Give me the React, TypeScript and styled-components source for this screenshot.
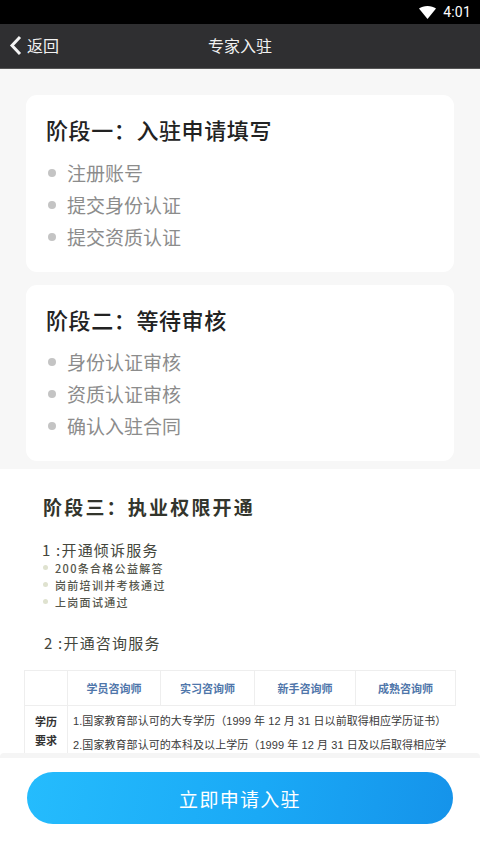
import React from "react";
import styled, { createGlobalStyle } from "styled-components";

const cjk = `"Noto Sans CJK SC", "Liberation Sans", sans-serif`;
const mixed = `"Liberation Sans", "Noto Sans CJK SC", sans-serif`;

const GlobalStyle = createGlobalStyle`
  html, body {
    margin: 0;
    padding: 0;
    background: #fff;
    font-family: ${cjk};
  }
  * {
    box-sizing: border-box;
  }
`;

const Screen = styled.div`
  position: relative;
  width: 480px;
  height: 853px;
  overflow: hidden;
  display: flex;
  flex-direction: column;
  background: #fff;
`;

const StatusBar = styled.div`
  height: 24px;
  flex: none;
  background: #000;
  color: #fff;
  display: flex;
  align-items: center;
  justify-content: flex-end;
  padding-right: 9px;
  gap: 7px;
  font: 14px Roboto, sans-serif;
  letter-spacing: 0.2px;
`;

const NavBar = styled.div`
  position: relative;
  height: 45px;
  flex: none;
  background: #2f2f31;
  border-bottom: 1px solid #555;
  color: #f2f2f2;
  display: flex;
  align-items: center;
  justify-content: center;
  padding-bottom: 2px;
  font-size: 16px;
`;

const BackLink = styled.div`
  position: absolute;
  left: 9px;
  top: 0;
  bottom: 2px;
  display: flex;
  align-items: center;
  gap: 5px;
`;

const Intro = styled.div`
  flex: none;
  background: #f7f7f7;
  height: 400px;
  padding: 26px 26px 0;
  display: flex;
  flex-direction: column;
  gap: 13px;
`;

const Card = styled.section<{ $height: number }>`
  height: ${(p) => p.$height}px;
  background: #fff;
  border-radius: 11px;
  padding: 18px 20px 0;
`;

const CardTitle = styled.h2<{ $gap: number }>`
  margin: 0 0 ${(p) => p.$gap}px;
  font-size: 22px;
  line-height: 33px;
  font-weight: 500;
  letter-spacing: 0.6px;
  color: #222;
`;

const StepList = styled.ul`
  margin: 0;
  padding: 0;
  list-style: none;
`;

const Step = styled.li`
  display: flex;
  align-items: center;
  gap: 11px;
  height: 32px;
  font-size: 19px;
  color: #8c8c8c;
  &::before {
    content: "";
    width: 8px;
    height: 8px;
    margin: 2px 0 0 2px;
    border-radius: 50%;
    background: #c4c4c4;
  }
`;

const Poster = styled.div`
  flex: 1;
  padding: 24px 24px 0;
  color: #33352c;
`;

const PosterTitle = styled.h3`
  margin: 0 0 0 19px;
  font-size: 19px;
  line-height: 27px;
  font-weight: 700;
  letter-spacing: 2.2px;
`;

const ServiceHeading = styled.div<{ $indent: number; $top: number }>`
  margin: ${(p) => p.$top}px 0 0 ${(p) => p.$indent}px;
  font-size: 15px;
  line-height: 18px;
  letter-spacing: 1.2px;
  color: #44463c;
`;

const ServiceList = styled.ul`
  margin: 0 0 24px 19px;
  padding: 0;
  list-style: none;
`;

const ServiceItem = styled.li`
  display: flex;
  align-items: center;
  gap: 7px;
  height: 17px;
  font-size: 11px;
  font-weight: 500;
  letter-spacing: 1.3px;
  color: #55564c;
  &::before {
    content: "";
    width: 5px;
    height: 5px;
    border-radius: 50%;
    background: #dfe2cf;
  }
`;

const Table = styled.div`
  margin-top: 18px;
  width: 432px;
  display: grid;
  grid-template-columns: 43px 93px 94px 101px 100px;
  grid-template-rows: 35px 120px;
  border-top: 1px solid #eeeeee;
  border-left: 1px solid #eeeeee;
`;

const HeadCell = styled.div`
  display: flex;
  align-items: center;
  justify-content: center;
  border-right: 1px solid #eeeeee;
  border-bottom: 1px solid #eeeeee;
  font-size: 11px;
  font-weight: 700;
  color: #4f76aa;
`;

const RowLabel = styled.div`
  border-right: 1px solid #eeeeee;
  padding-top: 6px;
  text-align: center;
  font-size: 11px;
  line-height: 18.5px;
  font-weight: 700;
  color: #333;
`;

const RowBody = styled.div`
  grid-column: 2 / 6;
  padding: 3px 0 0 5px;
  font-family: ${mixed};
  font-size: 11px;
  line-height: 24px;
  letter-spacing: 0.07px;
  color: #3a3a3a;
  white-space: nowrap;
  overflow: hidden;
`;

const Footer = styled.div`
  position: absolute;
  left: 0;
  right: 0;
  bottom: 0;
  height: 100px;
  background: #fff;
  border-top: 5px solid #f5f5f5;
  border-radius: 4px 4px 0 0;
  padding: 14px 27px 0;
`;

const ApplyButton = styled.button`
  display: block;
  width: 426px;
  height: 52px;
  border: 0;
  border-radius: 26px;
  background: linear-gradient(100deg, #25bcfd 0%, #1aa9f6 55%, #1593ea 100%);
  color: #fff;
  font-family: ${cjk};
  font-size: 19px;
  letter-spacing: 1.3px;
`;

const WifiIcon = () => (
  <svg width="17" height="13" viewBox="0 0 17 13">
    <path d="M0 2.6C2.2 .9 5.2 0 8.5 0s6.3.9 8.500 2.600L8.500 13z" fill="#fff" />
  </svg>
);

const ChevronLeft = () => (
  <svg width="13" height="21" viewBox="0 0 13 21">
    <path d="M11 2L3 10.500 11 19" fill="none" stroke="#f4f4f4" strokeWidth="3" />
  </svg>
);

const stageOne = ["注册账号", "提交身份认证", "提交资质认证"];
const stageTwo = ["身份认证审核", "资质认证审核", "确认入驻合同"];
const complaintSteps = ["200条合格公益解答", "岗前培训并考核通过", "上岗面试通过"];
const levels = ["学员咨询师", "实习咨询师", "新手咨询师", "成熟咨询师"];

export default function App() {
  return (
    <Screen>
      <GlobalStyle />
      <StatusBar>
        <WifiIcon />
        <span>4:01</span>
      </StatusBar>
      <NavBar>
        <BackLink>
          <ChevronLeft />
          <span>返回</span>
        </BackLink>
        专家入驻
      </NavBar>
      <Intro>
        <Card $height={177}>
          <CardTitle $gap={10}>阶段一：入驻申请填写</CardTitle>
          <StepList>
            {stageOne.map((s) => (
              <Step key={s}>{s}</Step>
            ))}
          </StepList>
        </Card>
        <Card $height={176}>
          <CardTitle $gap={9}>阶段二：等待审核</CardTitle>
          <StepList>
            {stageTwo.map((s) => (
              <Step key={s}>{s}</Step>
            ))}
          </StepList>
        </Card>
      </Intro>
      <Poster>
        <PosterTitle>阶段三：执业权限开通</PosterTitle>
        <ServiceHeading $indent={18} $top={21}>
          1 :开通倾诉服务
        </ServiceHeading>
        <ServiceList>
          {complaintSteps.map((s) => (
            <ServiceItem key={s}>{s}</ServiceItem>
          ))}
        </ServiceList>
        <ServiceHeading $indent={20} $top={0}>
          2 :开通咨询服务
        </ServiceHeading>
        <Table>
          <HeadCell />
          {levels.map((l) => (
            <HeadCell key={l}>{l}</HeadCell>
          ))}
          <RowLabel>
            学历
            <br />
            要求
          </RowLabel>
          <RowBody>
            1.国家教育部认可的大专学历（1999 年 12 月 31 日以前取得相应学历证书）
            <br />
            2.国家教育部认可的本科及以上学历（1999 年 12 月 31 日及以后取得相应学
          </RowBody>
        </Table>
      </Poster>
      <Footer>
        <ApplyButton>立即申请入驻</ApplyButton>
      </Footer>
    </Screen>
  );
}
